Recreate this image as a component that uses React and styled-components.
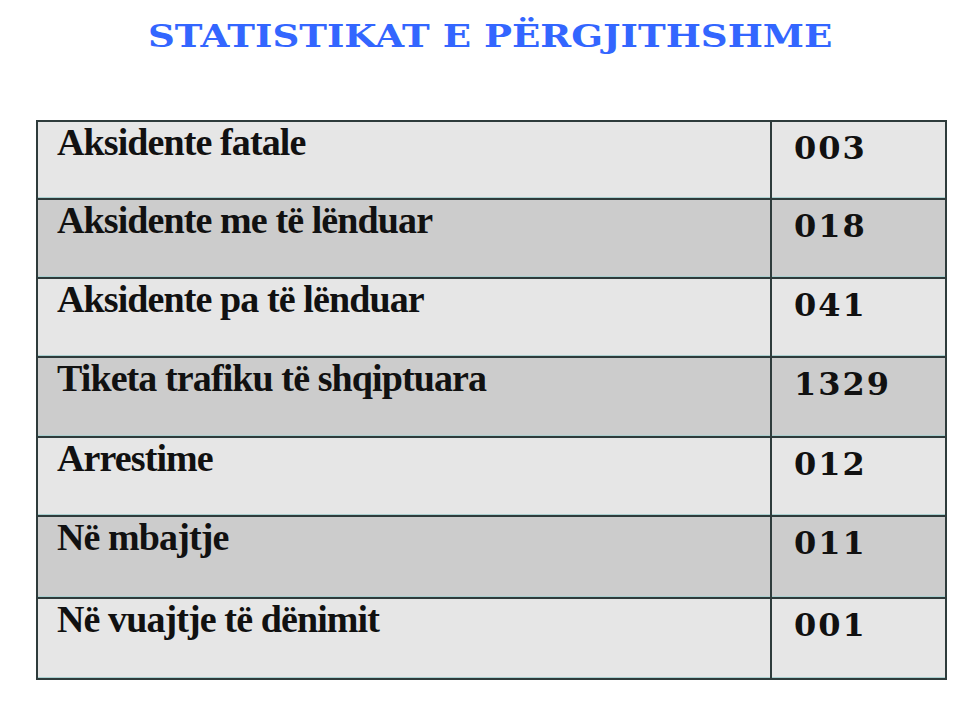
import React from "react";
import styled, { createGlobalStyle } from "styled-components";

const Global = createGlobalStyle`
  html, body { margin: 0; padding: 0; background: #ffffff; }
  body { font-family: "Liberation Serif", "Times New Roman", serif; }
`;

const Page = styled.div`
  width: 980px;
  height: 717px;
  padding-top: 21px;
  box-sizing: border-box;
  background: #ffffff;
`;

const Title = styled.h1`
  margin: 0 0 68px;
  text-align: center;
  font-family: "DejaVu Serif", "Liberation Serif", serif;
  font-weight: bold;
  font-size: 31px;
  line-height: 1;
  color: #3366ff;
`;

const TitleText = styled.span`
  display: inline-block;
  transform: scaleX(1.2);
  transform-origin: center;
`;

const Table = styled.div`
  margin-left: 36px;
  width: 911px;
  box-sizing: border-box;
  border: 2px solid #2e3b3b;
  border-bottom: none;
  display: flex;
  flex-direction: column;
`;

const Row = styled.div`
  display: grid;
  grid-template-columns: 732px 2px 173px;
  height: ${(p) => p.$h}px;
  box-sizing: border-box;
  border-bottom: 2px solid #2e3b3b;
  background: ${(p) => (p.$shade ? "#cccccc" : "#e6e6e6")};
  box-shadow: inset 0 -1px 0 #a9cfcf;
`;

const Divider = styled.div`
  background: #2e3b3b;
`;

const Label = styled.div`
  padding: 1px 0 0 19px;
  font-family: "Liberation Serif", "Times New Roman", serif;
  font-weight: bold;
  font-size: 38px;
  line-height: 1;
  letter-spacing: -0.9px;
  color: #111111;
  white-space: nowrap;
`;

const Value = styled.div`
  padding: 10px 0 0 22px;
  font-family: "DejaVu Serif", "Liberation Serif", serif;
  font-weight: bold;
  font-size: 32px;
  line-height: 1;
  letter-spacing: 2px;
  color: #111111;
`;

const rows = [
  { label: "Aksidente fatale", value: "003", h: 78 },
  { label: "Aksidente me të lënduar", value: "018", h: 79 },
  { label: "Aksidente pa të lënduar", value: "041", h: 79 },
  { label: "Tiketa trafiku të shqiptuara", value: "1329", h: 80 },
  { label: "Arrestime", value: "012", h: 79 },
  { label: "Në mbajtje", value: "011", h: 82 },
  { label: "Në vuajtje të dënimit", value: "001", h: 81 },
];

export default function App() {
  return (
    <Page>
      <Global />
      <Title>
        <TitleText>STATISTIKAT E PËRGJITHSHME</TitleText>
      </Title>
      <Table>
        {rows.map((r, i) => (
          <Row key={r.label} $h={r.h} $shade={i % 2 === 1}>
            <Label>{r.label}</Label>
            <Divider />
            <Value>{r.value}</Value>
          </Row>
        ))}
      </Table>
    </Page>
  );
}
